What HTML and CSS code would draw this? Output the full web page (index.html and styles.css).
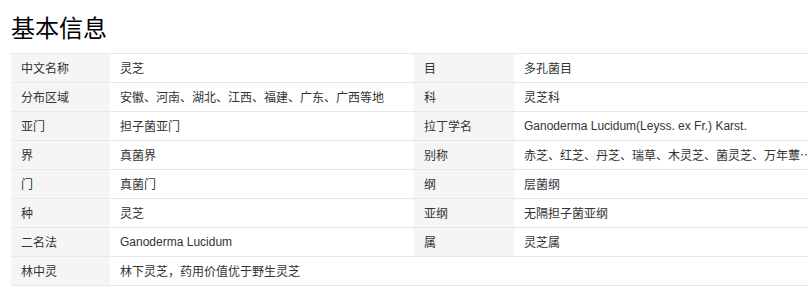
FILE: index.html
```html
<!DOCTYPE html>
<html lang="zh-CN">
<head>
<meta charset="utf-8">
<title>基本信息</title>
<link rel="stylesheet" href="styles.css">
</head>
<body>
<section class="basic-info">
  <h2 class="basic-info__title">基本信息</h2>
  <div class="info-grid">
    <div class="info-row">
      <div class="info-name">中文名称</div><div class="info-value">灵芝</div>
      <div class="info-name">目</div><div class="info-value">多孔菌目</div>
    </div>
    <div class="info-row">
      <div class="info-name">分布区域</div><div class="info-value">安徽、河南、湖北、江西、福建、广东、广西等地</div>
      <div class="info-name">科</div><div class="info-value">灵芝科</div>
    </div>
    <div class="info-row">
      <div class="info-name">亚门</div><div class="info-value">担子菌亚门</div>
      <div class="info-name">拉丁学名</div><div class="info-value latin">Ganoderma Lucidum(Leyss. ex Fr.) Karst.</div>
    </div>
    <div class="info-row">
      <div class="info-name">界</div><div class="info-value">真菌界</div>
      <div class="info-name">别称</div><div class="info-value">赤芝、红芝、丹芝、瑞草、木灵芝、菌灵芝、万年蕈、灵芝草</div>
    </div>
    <div class="info-row">
      <div class="info-name">门</div><div class="info-value">真菌门</div>
      <div class="info-name">纲</div><div class="info-value">层菌纲</div>
    </div>
    <div class="info-row">
      <div class="info-name">种</div><div class="info-value">灵芝</div>
      <div class="info-name">亚纲</div><div class="info-value">无隔担子菌亚纲</div>
    </div>
    <div class="info-row">
      <div class="info-name">二名法</div><div class="info-value latin">Ganoderma Lucidum</div>
      <div class="info-name">属</div><div class="info-value">灵芝属</div>
    </div>
    <div class="info-row">
      <div class="info-name">林中灵</div><div class="info-value">林下灵芝，药用价值优于野生灵芝</div>
      <div class="info-empty"></div><div class="info-empty"></div>
    </div>
  </div>
</section>
</body>
</html>
```
FILE: styles.css
```css
html, body {
  margin: 0;
  padding: 0;
  background: #fff;
}

body {
  font-family: "Noto Sans CJK SC", "Liberation Sans", sans-serif;
  color: #333;
  overflow: hidden;
}

.basic-info {
  padding: 9px 0 0 11px;
}

.basic-info__title {
  margin: 0 0 8px;
  font-size: 24px;
  line-height: 36px;
  font-weight: normal;
  color: #000;
}

/* the table runs a little past the right edge of the window */
.info-grid {
  width: 803px;
  border-top: 1px solid #e8e8e8;
}

.info-row {
  display: grid;
  grid-template-columns: 99px 304px 100px 300px;
  border-bottom: 1px solid #e8e8e8;
  height: 28px;
}

.info-name,
.info-value {
  font-size: 12px;
  line-height: 28px;
  white-space: nowrap;
  overflow: hidden;
  text-overflow: ellipsis;
}

.info-name {
  background: #f5f5f5;
  padding-left: 10px;
}

.info-value {
  padding: 0 0 0 10px;
}

.latin {
  font-family: "Liberation Sans", "Noto Sans CJK SC", sans-serif;
  color: #333;
}
```
